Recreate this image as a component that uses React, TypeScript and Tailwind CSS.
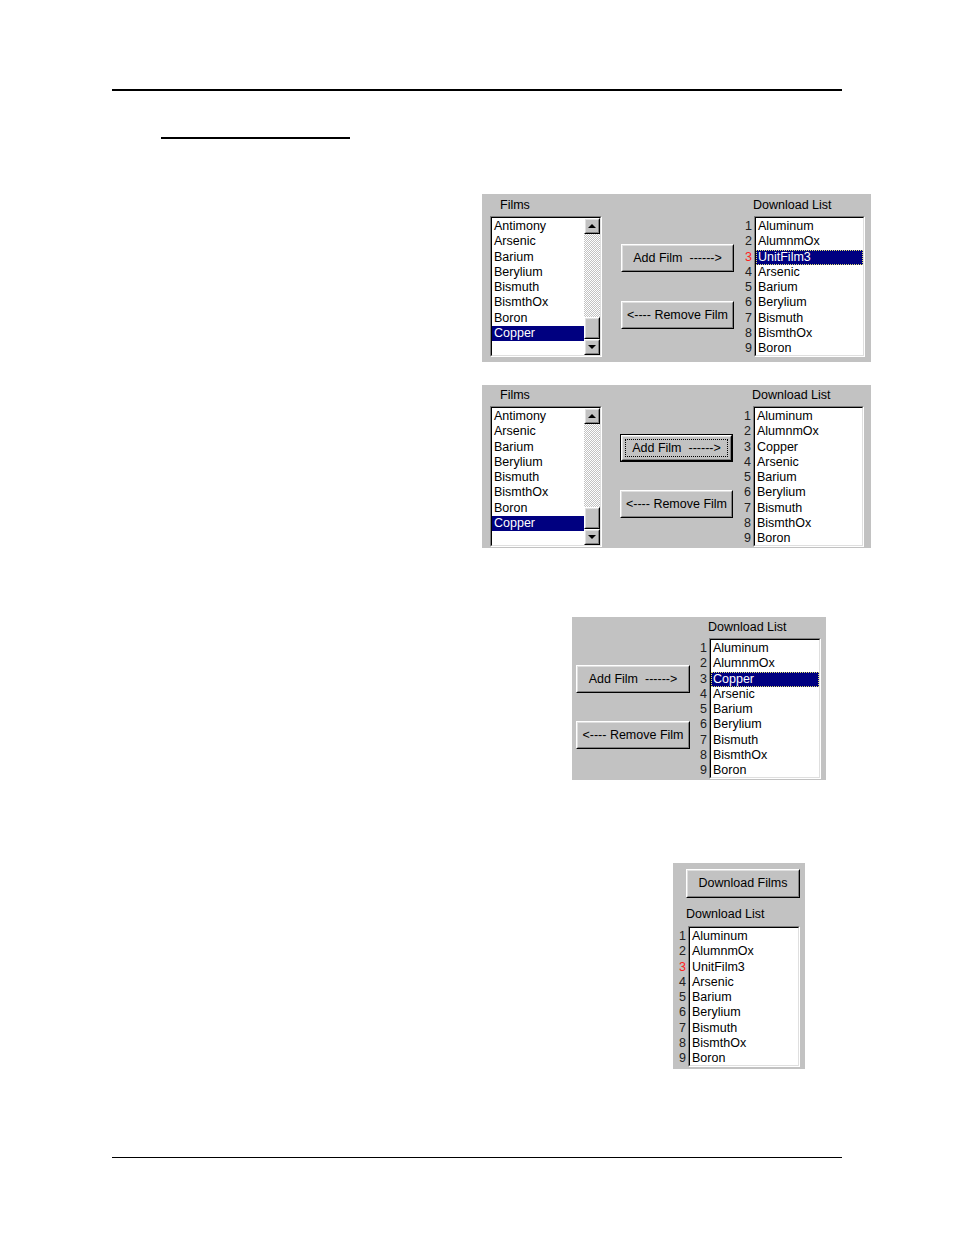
import React from 'react';

type Row = { label: string; selected?: boolean; focus?: boolean; red?: boolean };

const films: Row[] = [
  { label: 'Antimony' },
  { label: 'Arsenic' },
  { label: 'Barium' },
  { label: 'Berylium' },
  { label: 'Bismuth' },
  { label: 'BismthOx' },
  { label: 'Boron' },
  { label: 'Copper', selected: true },
];

const downloadList = (third: string, opts: { selected?: boolean; red?: boolean }): Row[] => [
  { label: 'Aluminum' },
  { label: 'AlumnmOx' },
  { label: third, selected: opts.selected, focus: opts.selected, red: opts.red },
  { label: 'Arsenic' },
  { label: 'Barium' },
  { label: 'Berylium' },
  { label: 'Bismuth' },
  { label: 'BismthOx' },
  { label: 'Boron' },
];

// Win95 style sunken frame
const Sunken: React.FC<{ className?: string; children: React.ReactNode }> = ({ className = '', children }) => (
  <div className={`border border-t-[#808080] border-l-[#808080] border-b-white border-r-white ${className}`}>
    <div className="h-full w-full border border-t-black border-l-black border-b-[#dfdfdf] border-r-[#dfdfdf] bg-white flex overflow-hidden">
      {children}
    </div>
  </div>
);

const Raised: React.FC<{ className?: string; children?: React.ReactNode }> = ({ className = '', children }) => (
  <div className={`border border-t-white border-l-white border-b-black border-r-black ${className}`}>
    <div className="h-full w-full border border-t-[#dfdfdf] border-l-[#dfdfdf] border-b-[#808080] border-r-[#808080] bg-[#c2c2c2] flex items-center justify-center">
      {children}
    </div>
  </div>
);

const Button: React.FC<{ label: string; focused?: boolean; className?: string }> = ({ label, focused, className = '' }) => {
  if (focused) {
    return (
      <div className={`border border-black ${className}`}>
        <Raised className="h-full w-full">
          <div className="h-full w-full p-[2px]">
            <div className="h-full w-full border border-dotted border-black flex items-center justify-center whitespace-pre">
              {label}
            </div>
          </div>
        </Raised>
      </div>
    );
  }
  return (
    <Raised className={className}>
      <span className="whitespace-pre">{label}</span>
    </Raised>
  );
};

const ListRows: React.FC<{ rows: Row[] }> = ({ rows }) => (
  <div className="flex-1 flex flex-col pt-[1px]">
    {rows.map((r) => (
      <div
        key={r.label}
        className={`h-[15.25px] leading-[13.25px] pl-[1px] whitespace-nowrap ${
          r.selected ? 'bg-[#000080] text-white' : 'text-black'
        } ${r.focus ? 'border border-dotted border-[#e0e070]' : 'border border-transparent'}`}
      >
        {r.label}
      </div>
    ))}
  </div>
);

const Scrollbar: React.FC = () => (
  <div className="w-[16px] flex flex-col">
    <Raised className="h-[16px] w-[16px]">
      <div className="w-0 h-0 border-x-[4px] border-x-transparent border-b-[4px] border-b-black" />
    </Raised>
    <div className="flex-1 flex flex-col justify-end bg-[repeating-conic-gradient(#c2c2c2_0_25%,#ffffff_0_50%)] bg-[length:2px_2px]">
      <Raised className="h-[22px] w-[16px]" />
    </div>
    <Raised className="h-[16px] w-[16px]">
      <div className="w-0 h-0 border-x-[4px] border-x-transparent border-t-[4px] border-t-black" />
    </Raised>
  </div>
);

const FilmsList: React.FC<{ labelHeight: string }> = ({ labelHeight }) => (
  <div className="flex flex-col">
    <div className={`${labelHeight} flex items-center pl-[10px]`}>Films</div>
    <Sunken className="w-[112px] h-[141px]">
      <ListRows rows={films} />
      <Scrollbar />
    </Sunken>
  </div>
);

const NumberedList: React.FC<{ rows: Row[]; listWidth: string }> = ({ rows, listWidth }) => (
  <div className="flex">
    <div className="w-[10px] mr-[2px] pt-[3px] flex flex-col items-end text-[#202020]">
      {rows.map((r, i) => (
        <div key={i} className={`h-[15.25px] leading-[15.25px] ${r.red ? 'text-[#ff2020]' : ''}`}>
          {i + 1}
        </div>
      ))}
    </div>
    <Sunken className={`${listWidth} h-[141px]`}>
      <ListRows rows={rows} />
    </Sunken>
  </div>
);

const DownloadColumn: React.FC<{ rows: Row[]; labelHeight: string; listWidth: string; className?: string }> = ({
  rows,
  labelHeight,
  listWidth,
  className = '',
}) => (
  <div className={`flex flex-col ${className}`}>
    <div className={`${labelHeight} flex items-center pl-[11px]`}>Download List</div>
    <NumberedList rows={rows} listWidth={listWidth} />
  </div>
);

export default function App() {
  return (
    <div className="w-[954px] min-h-[1235px] bg-white font-['Liberation_Sans',Arial,sans-serif] text-[12.5px] leading-[15px] text-black flex flex-col pt-[89px]">
      <div className="ml-[112px] w-[730px] h-[2px] bg-black" />
      <div className="ml-[161px] mt-[46px] w-[189px] h-[2px] bg-black" />

      {/* Panel 1 */}
      <div className="ml-[482px] mt-[55px] w-[389px] h-[168px] bg-[#c2c2c2] flex pl-[8px]">
        <FilmsList labelHeight="h-[22px]" />
        <div className="ml-[19px] mt-[50px] flex flex-col gap-[29px]">
          <Button label="Add Film  ------>" className="w-[113px] h-[28px]" />
          <Button label="<---- Remove Film" className="w-[113px] h-[28px]" />
        </div>
        <DownloadColumn
          className="ml-[8px]"
          labelHeight="h-[22px]"
          listWidth="w-[111px]"
          rows={downloadList('UnitFilm3', { selected: true, red: true })}
        />
      </div>

      {/* Panel 2 */}
      <div className="ml-[482px] mt-[23px] w-[389px] h-[163px] bg-[#c2c2c2] flex pl-[8px]">
        <FilmsList labelHeight="h-[21px]" />
        <div className="ml-[18px] mt-[49px] flex flex-col gap-[28px]">
          <Button focused label="Add Film  ------>" className="w-[113px] h-[28px]" />
          <Button label="<---- Remove Film" className="w-[113px] h-[28px]" />
        </div>
        <DownloadColumn
          className="ml-[8px]"
          labelHeight="h-[21px]"
          listWidth="w-[111px]"
          rows={downloadList('Copper', {})}
        />
      </div>

      {/* Panel 3 */}
      <div className="ml-[572px] mt-[69px] w-[254px] h-[163px] bg-[#c2c2c2] flex pl-[4px]">
        <div className="mt-[48px] flex flex-col gap-[28px]">
          <Button label="Add Film  ------>" className="w-[114px] h-[28px]" />
          <Button label="<---- Remove Film" className="w-[114px] h-[28px]" />
        </div>
        <DownloadColumn
          className="ml-[7px]"
          labelHeight="h-[21px]"
          listWidth="w-[112px]"
          rows={downloadList('Copper', { selected: true })}
        />
      </div>

      {/* Panel 4 */}
      <div className="ml-[673px] mt-[83px] w-[132px] h-[206px] bg-[#c2c2c2] flex flex-col pt-[6px]">
        <Button label="Download Films" className="ml-[13px] w-[114px] h-[29px]" />
        <div className="h-[28px] pt-[4px] flex items-center pl-[13px]">Download List</div>
        <div className="ml-[3px]">
          <NumberedList rows={downloadList('UnitFilm3', { red: true })} listWidth="w-[112px]" />
        </div>
      </div>

      <div className="ml-[112px] mt-[88px] w-[730px] h-[1px] bg-black" />
    </div>
  );
}
